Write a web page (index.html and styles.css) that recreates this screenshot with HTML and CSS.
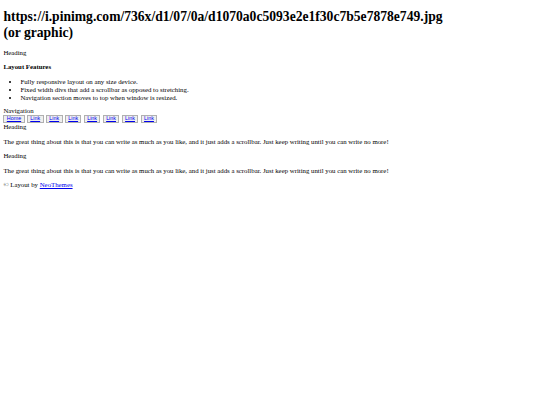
FILE: index.html
```html
<!DOCTYPE html>
<html>
<head>
<meta charset="utf-8">
<title>Layout</title>
<link rel="stylesheet" href="styles.css">
</head>
<body>
<header class="site-header">
<h1 class="logo">https://i.pinimg.com/736x/d1/07/0a/d1070a0c5093e2e1f30c7b5e7878e749.jpg (or graphic)</h1>
</header>
<aside class="sidebar">
<p class="plain">Heading</p>
<h4 class="features-title">Layout Features</h4>
<ul class="features">
<li>Fully responsive layout on any size device.</li>
<li>Fixed width divs that add a scrollbar as opposed to stretching.</li>
<li>Navigation section moves to top when window is resized.</li>
</ul>
</aside>
<nav class="nav">
<div class="nav-title">Navigation</div>
<ul class="nav-list">
<li><a href="#">Home</a></li>
<li><a href="#">Link</a></li>
<li><a href="#">Link</a></li>
<li><a href="#">Link</a></li>
<li><a href="#">Link</a></li>
<li><a href="#">Link</a></li>
<li><a href="#">Link</a></li>
<li><a href="#">Link</a></li>
</ul>
</nav>
<main class="content">
<div class="section-title">Heading</div>
<p class="text">The great thing about this is that you can write as much as you like, and it just adds a scrollbar. Just keep writing until you can write no more!</p>
<p class="section-title2">Heading</p>
<p class="text">The great thing about this is that you can write as much as you like, and it just adds a scrollbar. Just keep writing until you can write no more!</p>
</main>
<footer class="footer">© Layout by <a href="#">NeoThemes</a></footer>
</body>
</html>
```
FILE: styles.css
```css
html { background: #fff; }
body {
  margin: 3.4px;
  font-family: "Liberation Serif", "Times New Roman", serif;
  font-size: 6.8px;
  line-height: 8px;
  color: #000;
}
.logo {
  font-size: 13.6px;
  line-height: 16px;
  font-weight: bold;
  margin: 6px 0 7.3px;
  max-width: 450px;
}
.plain { margin: 6.5px 0; }
.features-title {
  font-size: 6.8px;
  font-weight: bold;
  margin: 6.5px 0;
}
.features {
  margin: 6.5px 0 5.6px;
  padding-left: 17px;
}
.nav-title { margin: 0; }
.nav-list {
  list-style: none;
  margin: 0;
  padding: 0;
  display: flex;
  gap: 2.3px;
}
.nav-list a {
  display: block;
  font-family: "Liberation Sans", Arial, sans-serif;
  font-size: 5.4px;
  line-height: 5.8px;
  color: #0000ee;
  background: #efefef;
  border: 1px solid #b0b0b0;
  padding: 0 2.4px;
  text-align: center;
}
.section-title { margin: 0; }
.text { margin: 6.5px 0; }
.section-title2 { margin: 6.5px 0; }
.footer { margin: 6.5px 0; }
.footer a { color: #0000ee; }
```
